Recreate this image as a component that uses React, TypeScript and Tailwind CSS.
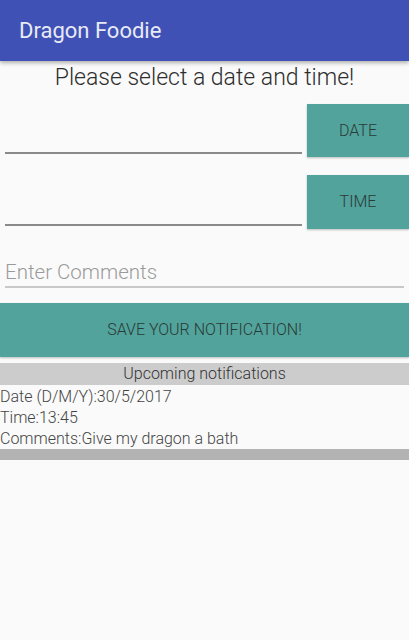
const Btn: React.FC<{ label: string; className?: string }> = ({ label, className = "" }) => (
  <div
    className={`bg-[#52a39b] flex items-center justify-center text-[16px] text-[#2a3a38] shadow-[0_1px_2px_rgba(0,0,0,0.25)] ${className}`}
  >
    {label}
  </div>
);

export default function App() {
  return (
    <div className="w-[409px] h-[640px] bg-[#fafafa] overflow-hidden font-['Roboto',sans-serif] font-light">
      <div className="h-[61px] bg-[#3f51b5] flex items-center px-[19px] text-[22px] text-[#e8eaf6] font-normal shadow-[0_2px_4px_rgba(0,0,0,0.3)] relative">
        Dragon Foodie
      </div>

      <p className="text-center text-[23px] leading-[27px] text-[#2e2e2e] mt-[3px]">
        Please select a date and time!
      </p>

      <div className="flex items-start mt-[13px] h-[53px]">
        <div className="ml-[5px] w-[297px] h-[50px] border-b-[2px] border-[#8a8a8a]" />
        <Btn label="DATE" className="ml-[5px] w-[102px] h-[53px]" />
      </div>

      <div className="flex items-start mt-[18px] h-[54px]">
        <div className="ml-[5px] w-[297px] h-[51px] border-b-[2px] border-[#8a8a8a]" />
        <Btn label="TIME" className="ml-[5px] w-[102px] h-[54px]" />
      </div>

      <div className="mx-[5px] mt-[24px] h-[35px] border-b-[2px] border-[#c8c8c8] flex items-end pb-[2px] text-[20.5px] leading-[24px] text-[#9a9a9a]">
        Enter Comments
      </div>

      <Btn label="SAVE YOUR NOTIFICATION!" className="mt-[15px] w-full h-[54px]" />

      <div className="mt-[6px] h-[22px] bg-[#cccccc] flex items-center justify-center text-[16px] text-[#333]">
        Upcoming notifications
      </div>
      <div className="text-[16px] leading-[21px] text-[#444] pt-[1px]">
        <div>Date (D/M/Y):30/5/2017</div>
        <div>Time:13:45</div>
        <div>Comments:Give my dragon a bath</div>
      </div>
      <div className="h-[11px] bg-[#b3b3b3]" />
    </div>
  );
}
